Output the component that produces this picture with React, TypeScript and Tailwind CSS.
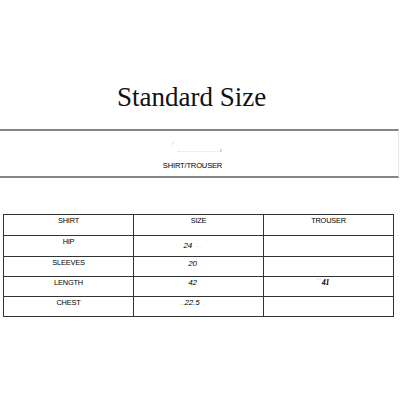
const rows = [
  { label: "HIP", size: "24", trouser: "", sizeTop: "pt-[6px]", sizeTail: "‐ ." },
  { label: "SLEEVES", size: "20", trouser: "", sizeTop: "pt-[3px]", sizeTail: "" },
  { label: "LENGTH", size: "42", trouser: "41", sizeTop: "pt-[2px]", sizeTail: "" },
  { label: "CHEST", size: "22.5", trouser: "", sizeTop: "pt-[2px]", sizeTail: "." },
];

const rowHeights = ["h-[21px]", "h-[20px]", "h-[20px]", "h-[20px]"];

export default function App() {
  return (
    <div className="h-[400px] w-[400px] overflow-hidden bg-white text-[#111]">
      <div className="h-[129px] pl-[117px] pt-[82px]">
        <h1 className="font-['Liberation_Serif',serif] text-[27px] leading-[30px] font-normal">Standard Size</h1>
      </div>

      <div className="relative h-[49px] w-[399px] border-y-2 border-r border-y-[#858585] border-r-[#e8e8e8]">
        <span className="absolute left-[172px] top-[9px] font-['Liberation_Sans',sans-serif] text-[6px] leading-[6px] text-[#c8c8c8]">r</span>
        <span className="absolute left-[178px] top-[20px] h-[1px] w-[42px] border-b border-dotted border-[#e2e2e2]" />
        <span className="absolute left-[220px] top-[16px] font-['Liberation_Sans',sans-serif] text-[6px] leading-[6px] text-[#777]">ı</span>
        <div className="flex justify-center pr-[13px] pt-[30px] font-['Liberation_Sans',sans-serif] text-[7.6px] leading-[9px] tracking-[-0.2px] text-black">
          SHIRT/TROUSER
        </div>
      </div>

      <div className="ml-[3px] mt-[36px] grid w-[391px] grid-cols-[130px_130px_130px] border-l border-t border-[#333] font-['Liberation_Sans',sans-serif] text-[7.4px] leading-[8px] tracking-[-0.2px] text-black">
        {["SHIRT", "SIZE", "TROUSER"].map((h) => (
          <div key={h} className="h-[21px] border-b border-r border-[#333] pt-[2px] text-center">
            {h}
          </div>
        ))}
        {rows.map((r, i) => (
          <div key={r.label} className="contents">
            <div className={`${rowHeights[i]} border-b border-r border-[#333] pt-[2px] text-center`}>{r.label}</div>
            <div className={`${rowHeights[i]} border-b border-r border-[#333] ${r.sizeTop} pr-[12px] text-center text-[8px] italic`}>
              {r.label === "CHEST" ? <span className="text-[#bbb]">..</span> : null}
              {r.size}
              {r.sizeTail ? <span className="ml-[3px] text-[#d0d0d0]">{r.sizeTail}</span> : null}
            </div>
            <div className={`${rowHeights[i]} border-b border-r border-[#333] pt-[2px] pr-[12px] text-center`}>
              {r.trouser ? (
                <span className="font-['Liberation_Serif',serif] text-[8px] font-bold italic">
                  <span className="mr-[1px] font-normal text-[#bbb]">``</span>
                  {r.trouser}
                </span>
              ) : null}
            </div>
          </div>
        ))}
      </div>
    </div>
  );
}
